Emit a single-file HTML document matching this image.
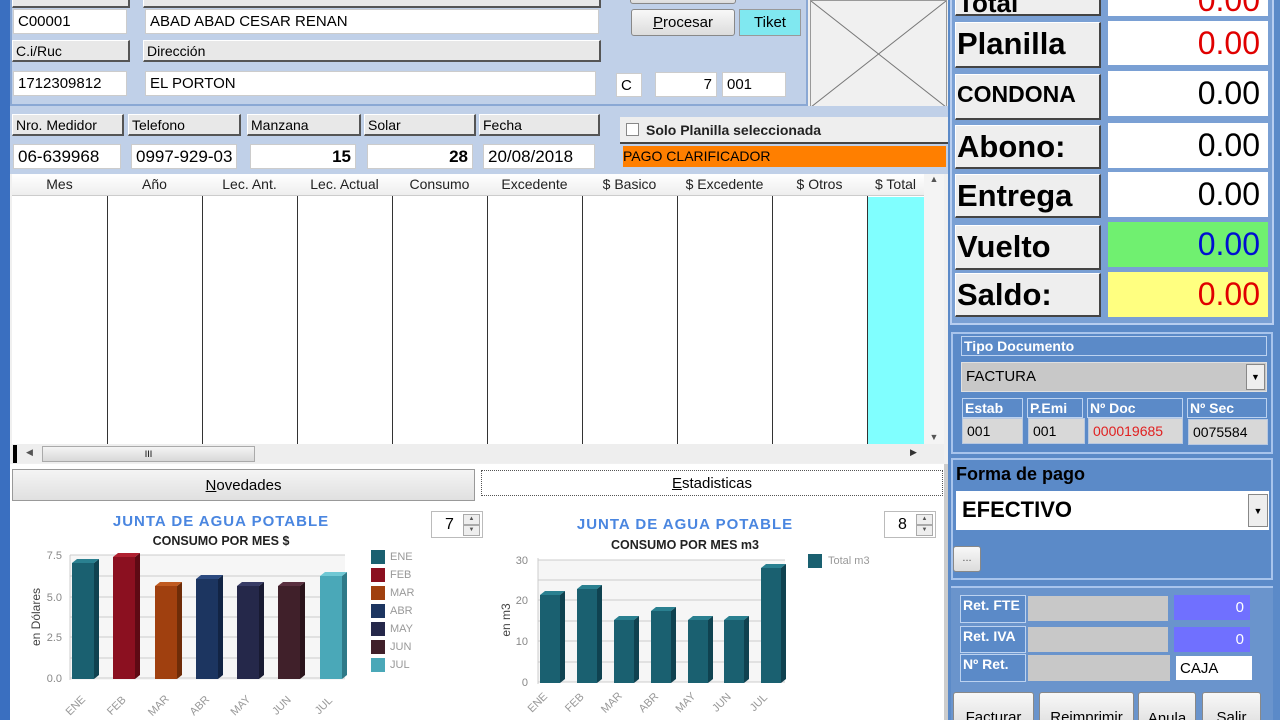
<!DOCTYPE html>
<html style="overflow:hidden;height:720px"><head><meta charset="utf-8"><style>
*{box-sizing:border-box;margin:0;padding:0}
html,body{overflow:hidden}
body{width:1280px;height:720px;position:relative;background:#f0f0f0;font-family:"Liberation Sans",sans-serif;font-size:14px;color:#000}
.a{position:absolute}
.lbl{position:absolute;background:#e8e8e8;border:1px solid #fff;border-right:2px solid #555;border-bottom:2px solid #555;font-size:14px;padding:1px 3px;height:22px;line-height:18px}
.fld{position:absolute;background:#fff;border:1px solid #ccc;font-size:15px;padding:0 4px;height:25px;line-height:24px}
.r{text-align:right}
.rl{position:absolute;left:955px;width:146px;background:#eee;border:1px solid #fff;border-right:2px solid #444;border-bottom:2px solid #444;font-weight:bold;font-size:31px;line-height:42px;padding-left:1px}
.rv{position:absolute;left:1108px;width:160px;background:#fff;font-size:32px;text-align:right;padding-right:8px;line-height:44px}
.hd{position:absolute;top:175px;height:20px;font-size:14px;text-align:center;color:#222;line-height:18px}
.vl{position:absolute;top:196px;height:248px;width:1px;background:#333}
.bl{position:absolute;background:#5b8ac8;border:1px solid #bcd2f0;color:#fff;font-weight:bold;font-size:14px;padding-left:2px;line-height:18px;height:20px}
.gv{position:absolute;background:#d8d8d8;font-size:14px;padding-left:4px;line-height:24px;height:26px;border:1px solid #b8c8e0}
.btn{position:absolute;background:linear-gradient(#f8f8f8,#dcdcdc);border:1px solid #888;border-radius:3px;font-size:15px;text-align:center}
.sp{position:absolute;right:2px;width:17px;height:11px;background:#eee;border:1px solid #aaa;font-size:6px;text-align:center;line-height:9px;color:#555}
</style></head><body>
<div class="a" style="left:0;top:0;width:10px;height:720px;background:#3a6fc0"></div>
<div class="a" style="left:10px;top:0;width:798px;height:106px;background:#c0d0e8;border:2px solid #8aa8d4;border-top:none"></div>
<div class="lbl" style="left:12px;top:-14px;width:118px"></div>
<div class="lbl" style="left:143px;top:-14px;width:458px"></div>
<div class="fld" style="left:13px;top:9px;width:114px">C00001</div>
<div class="fld" style="left:145px;top:9px;width:454px">ABAD ABAD CESAR RENAN</div>
<div class="lbl" style="left:12px;top:40px;width:118px">C.i/Ruc</div>
<div class="lbl" style="left:143px;top:40px;width:458px">Dirección</div>
<div class="fld" style="left:13px;top:71px;width:114px">1712309812</div>
<div class="fld" style="left:145px;top:71px;width:451px">EL PORTON</div>
<div class="btn" style="left:630px;top:-10px;width:106px;height:14px"></div>
<div class="btn" style="left:631px;top:9px;width:104px;height:27px;line-height:25px"><u>P</u>rocesar</div>
<div class="a" style="left:739px;top:9px;width:62px;height:27px;background:#80e8f0;border:1px solid #999;text-align:center;line-height:25px;font-size:15px">Tiket</div>
<div class="fld" style="left:616px;top:73px;width:26px;height:24px">C</div>
<div class="fld r" style="left:655px;top:72px;width:62px">7</div>
<div class="fld" style="left:722px;top:72px;width:64px">001</div>
<div class="a" style="left:810px;top:0;width:137px;height:108px;background:#f0f0f0;border:1px solid #999">
<svg width="135" height="106"><line x1="0" y1="106" x2="135" y2="0" stroke="#777"/><line x1="0" y1="0" x2="135" y2="106" stroke="#777"/></svg></div>
<div class="a" style="left:10px;top:106px;width:938px;height:68px;background:#c0d0e8"></div>
<div class="lbl" style="left:12px;top:114px;width:112px">Nro. Medidor</div>
<div class="lbl" style="left:128px;top:114px;width:113px">Telefono</div>
<div class="lbl" style="left:247px;top:114px;width:114px">Manzana</div>
<div class="lbl" style="left:364px;top:114px;width:112px">Solar</div>
<div class="lbl" style="left:479px;top:114px;width:121px">Fecha</div>
<div class="fld" style="left:13px;top:144px;width:108px;font-size:17px">06-639968</div>
<div class="fld" style="left:131px;top:144px;width:106px;font-size:17px;overflow:hidden;white-space:nowrap">0997-929-03</div>
<div class="fld r" style="left:250px;top:144px;width:106px;font-size:17px;font-weight:bold">15</div>
<div class="fld r" style="left:367px;top:144px;width:106px;font-size:17px;font-weight:bold">28</div>
<div class="fld" style="left:483px;top:144px;width:112px;font-size:17px">20/08/2018</div>
<div class="a" style="left:620px;top:117px;width:328px;height:27px;background:#eee;border-bottom:2px solid #444;font-size:14px;font-weight:bold;line-height:26px;padding-left:26px;color:#222">Solo Planilla seleccionada<div class="a" style="left:6px;top:6px;width:13px;height:13px;background:#fff;border:1px solid #888"></div></div>
<div class="a" style="left:623px;top:146px;width:323px;height:21px;background:#ff7f00;font-size:14px;line-height:21px">PAGO CLARIFICADOR</div>
<div class="a" style="left:12px;top:174px;width:932px;height:270px;background:#fff"></div>
<div class="a" style="left:12px;top:174px;width:912px;height:22px;background:linear-gradient(#fff,#eee);border-bottom:1px solid #ccc"></div>
<div class="hd" style="left:12px;width:95px">Mes</div><div class="hd" style="left:107px;width:95px">Año</div><div class="hd" style="left:202px;width:95px">Lec. Ant.</div><div class="hd" style="left:297px;width:95px">Lec. Actual</div><div class="hd" style="left:392px;width:95px">Consumo</div><div class="hd" style="left:487px;width:95px">Excedente</div><div class="hd" style="left:582px;width:95px">$ Basico</div><div class="hd" style="left:677px;width:95px">$ Excedente</div><div class="hd" style="left:772px;width:95px">$ Otros</div><div class="hd" style="left:867px;width:57px">$ Total</div>
<div class="a" style="left:867px;top:197px;width:57px;height:247px;background:#80ffff"></div>
<div class="vl" style="left:107px"></div><div class="vl" style="left:202px"></div><div class="vl" style="left:297px"></div><div class="vl" style="left:392px"></div><div class="vl" style="left:487px"></div><div class="vl" style="left:582px"></div><div class="vl" style="left:677px"></div><div class="vl" style="left:772px"></div><div class="vl" style="left:867px"></div>
<div class="a" style="left:924px;top:174px;width:20px;height:270px;background:#f4f4f4;font-size:9px;text-align:center;color:#555">▲<div style="position:absolute;bottom:2px;width:20px">▼</div></div>
<div class="a" style="left:12px;top:444px;width:932px;height:19px;background:#eee"></div>
<div class="a" style="left:13px;top:445px;width:4px;height:18px;background:#000"></div>
<div class="a" style="left:26px;top:447px;font-size:9px;color:#555">◀</div>
<div class="a" style="left:42px;top:446px;width:213px;height:16px;background:linear-gradient(#f4f4f4,#d8d8d8);border:1px solid #aaa;font-size:9px;text-align:center;line-height:14px">III</div>
<div class="a" style="left:910px;top:447px;font-size:9px;color:#333">▶</div>
<div class="a" style="left:10px;top:464px;width:938px;height:256px;background:#fff"></div>
<div class="a" style="left:12px;top:469px;width:463px;height:32px;background:linear-gradient(#f4f4f4,#e0e0e0);border:1px solid #999;font-size:15px;text-align:center;line-height:32px"><u>N</u>ovedades</div>
<div class="a" style="left:481px;top:470px;width:462px;height:26px;border:1px dotted #555;font-size:15px;text-align:center;line-height:26px"><u>E</u>stadisticas</div>
<div class="a" style="left:431px;top:511px;width:52px;height:27px;border:1px solid #bbb;font-size:16px;line-height:26px;padding-left:13px">7<div class="sp" style="top:2px">▲</div><div class="sp" style="top:13px">▼</div></div>
<div class="a" style="left:884px;top:511px;width:52px;height:27px;border:1px solid #bbb;font-size:16px;line-height:26px;padding-left:13px">8<div class="sp" style="top:2px">▲</div><div class="sp" style="top:13px">▼</div></div>
<svg class="a" style="left:0;top:500px" width="948" height="220" font-family="Liberation Sans">
<text x="221" y="26" fill="#4a86e0" font-size="15" font-weight="bold" text-anchor="middle" letter-spacing="1">JUNTA DE AGUA POTABLE</text>
<text x="221" y="45" font-size="12.5" font-weight="bold" text-anchor="middle" fill="#222">CONSUMO POR MES $</text>
<rect x="70" y="55" width="275" height="125" fill="#f6f6f6"/>
<g stroke="#ccc"><line x1="70" y1="55" x2="345" y2="55"/><line x1="70" y1="76" x2="345" y2="76"/><line x1="70" y1="97" x2="345" y2="97"/><line x1="70" y1="117" x2="345" y2="117"/><line x1="70" y1="137" x2="345" y2="137"/><line x1="70" y1="158" x2="345" y2="158"/><line x1="70" y1="178" x2="345" y2="178"/><line x1="70" y1="55" x2="70" y2="180"/></g>
<g font-size="11" fill="#888" text-anchor="end"><text x="62" y="59">7.5</text><text x="62" y="101">5.0</text><text x="62" y="141">2.5</text><text x="62" y="182">0.0</text></g>
<text transform="translate(40 117) rotate(-90)" font-size="12" fill="#444" text-anchor="middle">en Dólares</text>
<g><rect x="72" y="63" width="22" height="116" fill="#1a6070"/><polygon points="94,63 99,59 99,175 94,179" fill="#0f4250"/><polygon points="72,63 94,63 99,59 77,59" fill="#2a8090"/>
<rect x="113" y="57" width="22" height="122" fill="#8b1020"/><polygon points="135,57 140,53 140,175 135,179" fill="#5e0a14"/><polygon points="113,57 135,57 140,53 118,53" fill="#b02030"/>
<rect x="155" y="86" width="22" height="93" fill="#a0400f"/><polygon points="177,86 182,82 182,175 177,179" fill="#6e2c08"/><polygon points="155,86 177,86 182,82 160,82" fill="#c05a20"/>
<rect x="196" y="79" width="22" height="100" fill="#1c3560"/><polygon points="218,79 223,75 223,175 218,179" fill="#122444"/><polygon points="196,79 218,79 223,75 201,75" fill="#2c4a80"/>
<rect x="237" y="86" width="22" height="93" fill="#25284a"/><polygon points="259,86 264,82 264,175 259,179" fill="#181a32"/><polygon points="237,86 259,86 264,82 242,82" fill="#383c66"/>
<rect x="278" y="86" width="22" height="93" fill="#40202a"/><polygon points="300,86 305,82 305,175 300,179" fill="#2a141b"/><polygon points="278,86 300,86 305,82 283,82" fill="#5a3040"/>
<rect x="320" y="76" width="22" height="103" fill="#4aa8b8"/><polygon points="342,76 347,72 347,175 342,179" fill="#2f7a88"/><polygon points="320,76 342,76 347,72 325,72" fill="#70c8d4"/></g>
<g font-size="11" fill="#999"><text transform="translate(78 208) rotate(-45)" text-anchor="middle">ENE</text><text transform="translate(119 208) rotate(-45)" text-anchor="middle">FEB</text><text transform="translate(161 208) rotate(-45)" text-anchor="middle">MAR</text><text transform="translate(202 208) rotate(-45)" text-anchor="middle">ABR</text><text transform="translate(243 208) rotate(-45)" text-anchor="middle">MAY</text><text transform="translate(284 208) rotate(-45)" text-anchor="middle">JUN</text><text transform="translate(326 208) rotate(-45)" text-anchor="middle">JUL</text></g>
<g font-size="11" fill="#999"><rect x="371" y="50" width="14" height="14" fill="#1a6070"/><text x="390" y="60">ENE</text><rect x="371" y="68" width="14" height="14" fill="#8b1020"/><text x="390" y="78">FEB</text><rect x="371" y="86" width="14" height="14" fill="#a0400f"/><text x="390" y="96">MAR</text><rect x="371" y="104" width="14" height="14" fill="#1c3560"/><text x="390" y="114">ABR</text><rect x="371" y="122" width="14" height="14" fill="#25284a"/><text x="390" y="132">MAY</text><rect x="371" y="140" width="14" height="14" fill="#40202a"/><text x="390" y="150">JUN</text><rect x="371" y="158" width="14" height="14" fill="#4aa8b8"/><text x="390" y="168">JUL</text></g>
<text x="685" y="29" fill="#4a86e0" font-size="15" font-weight="bold" text-anchor="middle" letter-spacing="1">JUNTA DE AGUA POTABLE</text>
<text x="685" y="49" font-size="12.5" font-weight="bold" text-anchor="middle" fill="#222">CONSUMO POR MES m3</text>
<rect x="538" y="60" width="247" height="122" fill="#f6f6f6"/>
<g stroke="#ccc"><line x1="538" y1="60" x2="785" y2="60"/><line x1="538" y1="80" x2="785" y2="80"/><line x1="538" y1="100" x2="785" y2="100"/><line x1="538" y1="121" x2="785" y2="121"/><line x1="538" y1="141" x2="785" y2="141"/><line x1="538" y1="162" x2="785" y2="162"/><line x1="538" y1="182" x2="785" y2="182"/><line x1="538" y1="58" x2="538" y2="184"/></g>
<g font-size="11" fill="#888" text-anchor="end"><text x="528" y="64">30</text><text x="528" y="104">20</text><text x="528" y="145">10</text><text x="528" y="186">0</text></g>
<text transform="translate(510 120) rotate(-90)" font-size="12" fill="#444" text-anchor="middle">en m3</text>
<g fill="#1a6070"><rect x="540" y="95" width="20" height="88"/><rect x="577" y="89" width="20" height="94"/><rect x="614" y="120" width="20" height="63"/><rect x="651" y="111" width="20" height="72"/><rect x="688" y="120" width="20" height="63"/><rect x="724" y="120" width="20" height="63"/><rect x="761" y="68" width="20" height="115"/></g>
<g fill="#2a8090"><polygon points="540,95 560,95 565,91 545,91"/><polygon points="577,89 597,89 602,85 582,85"/><polygon points="614,120 634,120 639,116 619,116"/><polygon points="651,111 671,111 676,107 656,107"/><polygon points="688,120 708,120 713,116 693,116"/><polygon points="724,120 744,120 749,116 729,116"/><polygon points="761,68 781,68 786,64 766,64"/></g>
<g fill="#0f4250"><polygon points="560,95 565,91 565,179 560,183"/><polygon points="597,89 602,85 602,179 597,183"/><polygon points="634,120 639,116 639,179 634,183"/><polygon points="671,111 676,107 676,179 671,183"/><polygon points="708,120 713,116 713,179 708,183"/><polygon points="744,120 749,116 749,179 744,183"/><polygon points="781,68 786,64 786,179 781,183"/></g>
<g font-size="11" fill="#999" text-anchor="middle"><text transform="translate(540 205) rotate(-45)">ENE</text><text transform="translate(577 205) rotate(-45)">FEB</text><text transform="translate(614 205) rotate(-45)">MAR</text><text transform="translate(651 205) rotate(-45)">ABR</text><text transform="translate(688 205) rotate(-45)">MAY</text><text transform="translate(724 205) rotate(-45)">JUN</text><text transform="translate(761 205) rotate(-45)">JUL</text></g>
<rect x="808" y="54" width="14" height="14" fill="#1a6070"/><text x="828" y="64" font-size="11" fill="#999">Total m3</text>
</svg>
<div class="a" style="left:944px;top:464px;width:4px;height:256px;background:#ccc"></div>
<div class="a" style="left:948px;top:0;width:332px;height:720px;background:#5b8ac8"></div>
<div class="a" style="left:950px;top:0;width:324px;height:325px;background:#7aa0d4;border:2px solid #b8cef0;border-top:none"></div>
<div class="rl" style="top:-24px;height:40px"></div><div class="rv" style="top:-24px;height:40px;color:#e00000;line-height:48px">0.00</div>
<div class="a" style="left:958px;top:-12px;font-size:26px;font-weight:bold">Total</div>
<div class="rl" style="top:22px;height:46px">Planilla</div><div class="rv" style="top:21px;height:44px;color:#e00000">0.00</div>
<div class="rl" style="top:74px;height:46px;font-size:23px;line-height:38px">CONDONA</div><div class="rv" style="top:71px;height:45px">0.00</div>
<div class="rl" style="top:125px;height:44px">Abono:</div><div class="rv" style="top:123px;height:45px">0.00</div>
<div class="rl" style="top:174px;height:44px">Entrega</div><div class="rv" style="top:172px;height:45px">0.00</div>
<div class="rl" style="top:225px;height:45px">Vuelto</div><div class="rv" style="top:222px;height:45px;background:#70f070;color:#0010d0">0.00</div>
<div class="rl" style="top:273px;height:44px">Saldo:</div><div class="rv" style="top:272px;height:45px;background:#ffff80;color:#e00000">0.00</div>
<div class="a" style="left:951px;top:332px;width:322px;height:122px;border:2px solid #a8c4ec"></div>
<div class="bl" style="left:961px;top:336px;width:306px">Tipo Documento</div>
<div class="a" style="left:961px;top:362px;width:306px;height:30px;background:#c8c8c8;border:1px solid #e0e0e0;font-size:15px;line-height:28px;padding-left:4px">FACTURA<div class="a" style="right:1px;top:1px;width:19px;height:26px;background:#eee;border:1px solid #888;font-size:9px;text-align:center;line-height:24px">▼</div></div>
<div class="bl" style="left:962px;top:398px;width:61px">Estab</div><div class="bl" style="left:1027px;top:398px;width:56px">P.Emi</div><div class="bl" style="left:1087px;top:398px;width:96px">Nº Doc</div><div class="bl" style="left:1187px;top:398px;width:80px">Nº Sec</div>
<div class="gv" style="left:962px;top:418px;width:61px">001</div><div class="gv" style="left:1028px;top:418px;width:57px">001</div><div class="gv" style="left:1088px;top:418px;width:95px;color:#e02020">000019685</div><div class="gv" style="left:1188px;top:419px;width:80px">0075584</div>
<div class="a" style="left:951px;top:458px;width:322px;height:122px;border:2px solid #a8c4ec"></div>
<div class="a" style="left:956px;top:464px;font-size:18px;font-weight:bold;color:#000">Forma de pago</div>
<div class="a" style="left:956px;top:491px;width:313px;height:39px;background:#fff;font-size:22px;font-weight:bold;line-height:38px;padding-left:6px">EFECTIVO<div class="a" style="right:1px;top:3px;width:20px;height:33px;background:#eee;border:1px solid #888;font-size:9px;text-align:center;line-height:32px">▼</div></div>
<div class="btn" style="left:953px;top:546px;width:28px;height:26px;font-size:11px;line-height:22px;color:#555">...</div>
<div class="a" style="left:951px;top:586px;width:322px;height:134px;background:#6a94cc;border-top:2px solid #a8c4ec"></div>
<div class="bl" style="left:960px;top:595px;width:66px;height:28px;background:#5b8ac8;line-height:18px">Ret. FTE</div>
<div class="bl" style="left:960px;top:626px;width:66px;height:27px">Ret. IVA</div>
<div class="bl" style="left:960px;top:654px;width:66px;height:28px">Nº Ret.</div>
<div class="a" style="left:1028px;top:596px;width:140px;height:25px;background:#c8c8c8"></div>
<div class="a" style="left:1028px;top:627px;width:140px;height:25px;background:#c8c8c8"></div>
<div class="a" style="left:1028px;top:655px;width:142px;height:26px;background:#c8c8c8"></div>
<div class="a" style="left:1174px;top:595px;width:76px;height:25px;background:#7070ff;color:#fff;text-align:right;padding-right:6px;line-height:25px;font-size:15px">0</div>
<div class="a" style="left:1174px;top:627px;width:76px;height:25px;background:#7070ff;color:#fff;text-align:right;padding-right:6px;line-height:25px;font-size:15px">0</div>
<div class="a" style="left:1176px;top:656px;width:76px;height:24px;background:#fff;font-size:15px;line-height:26px;padding-left:4px">CAJA</div>
<div class="a" style="left:948px;top:688px;width:332px;height:32px;overflow:hidden">
<div class="btn" style="left:5px;top:4px;width:81px;height:40px;line-height:50px">Facturar</div>
<div class="btn" style="left:91px;top:4px;width:95px;height:40px;line-height:50px">Reimprimir</div>
<div class="btn" style="left:190px;top:4px;width:58px;height:40px;line-height:52px">Anula</div>
<div class="btn" style="left:254px;top:4px;width:59px;height:40px;line-height:50px">Salir</div>
</div>
</body></html>
